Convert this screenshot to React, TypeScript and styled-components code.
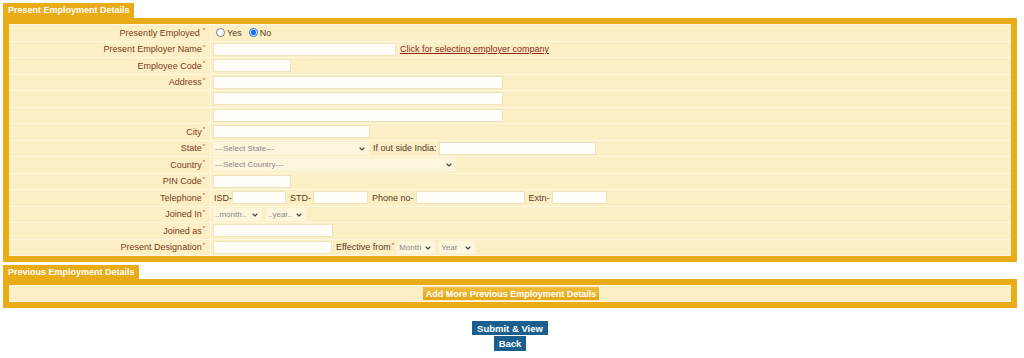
import React from 'react';
import styled, { createGlobalStyle } from 'styled-components';
import { ChevronDown } from 'lucide-react';

const GOLD = '#e9ac17';
const CELL = '#fcefc6';
const LINE = '#fff7e0';

const GlobalStyle = createGlobalStyle`
  html, body {
    margin: 0;
    padding: 0;
    background: #ffffff;
    font-family: "Liberation Sans", Arial, sans-serif;
  }
`;

const Page = styled.div`
  padding: 3px 7px 0 3px;
  font-size: 9px;
`;

const Section = styled.section<{ $gap?: number }>`
  margin-top: ${(p) => p.$gap ?? 0}px;
`;

const Tab = styled.div<{ $h?: number }>`
  display: inline-block;
  background: ${GOLD};
  color: #ffffff;
  font-weight: bold;
  font-size: 9px;
  line-height: ${(p) => p.$h ?? 15}px;
  height: ${(p) => p.$h ?? 15}px;
  padding: 0 4px 0 5px;
`;

const Box = styled.div`
  border: 6px solid ${GOLD};
  background: ${LINE};
  padding: 1px 0;
  display: flex;
  flex-direction: column;
  gap: 1px;
`;

const Row = styled.div<{ $single?: boolean; $h?: number }>`
  display: grid;
  grid-template-columns: ${(p) => (p.$single ? '1fr' : '201px 1fr')};
  gap: 1px;
  height: ${(p) => p.$h ?? 15.5}px;
`;

const LabelCell = styled.div`
  background: ${CELL};
  display: flex;
  align-items: center;
  justify-content: flex-end;
  padding-right: 5px;
  color: #7d3a1a;
  white-space: nowrap;
`;

const Req = styled.sup<{ $space?: boolean }>`
  color: #d2322d;
  font-size: 6px;
  margin-left: ${(p) => (p.$space ? 3 : 1)}px;
  align-self: flex-start;
  line-height: 8px;
  margin-top: 1px;
`;

const ValueCell = styled.div<{ $center?: boolean }>`
  background: ${CELL};
  display: flex;
  align-items: center;
  justify-content: ${(p) => (p.$center ? 'center' : 'flex-start')};
  padding-left: 2px;
  color: #5c3a22;
  white-space: nowrap;
`;

const Input = styled.input<{ $w: number }>`
  box-sizing: border-box;
  width: ${(p) => p.$w}px;
  height: 13px;
  margin: 0;
  padding: 0 2px;
  border: 1px solid #f1e3b9;
  background: #fffef9;
  font-size: 9px;
  font-family: inherit;
  outline: none;
`;

const Text = styled.span<{ $ml?: number; $mr?: number }>`
  margin-left: ${(p) => p.$ml ?? 0}px;
  margin-right: ${(p) => p.$mr ?? 0}px;
  color: #5a3a24;
`;

const Link = styled.a`
  margin-left: 4px;
  color: #8d2a1c;
  text-decoration: underline;
  cursor: pointer;
`;

const RadioLabel = styled.label<{ $ml?: number }>`
  display: inline-flex;
  align-items: center;
  color: #5a3a24;
  margin-right: 7px;
  margin-left: ${(p) => p.$ml ?? 3}px;
`;

const Radio = styled.input`
  width: 9px;
  height: 9px;
  margin: 0 2px 0 0;
  accent-color: #1a73e8;
`;

const SelectWrap = styled.span<{ $w: number; $ml?: number }>`
  position: relative;
  display: inline-flex;
  align-items: center;
  width: ${(p) => p.$w}px;
  height: 13px;
  margin-left: ${(p) => p.$ml ?? 0}px;
  background: #fdf5dc;

  svg {
    position: absolute;
    right: 3px;
    top: 3px;
    pointer-events: none;
    color: #4a4a4a;
  }
`;

const Select = styled.select`
  appearance: none;
  -webkit-appearance: none;
  width: 100%;
  height: 13px;
  border: none;
  background: transparent;
  color: #8a8a8a;
  font-size: 8px;
  font-family: inherit;
  padding: 0 2px;
  margin: 0;
  outline: none;
`;

const AddBtn = styled.button`
  background: linear-gradient(#f1bd3c, #e2a617);
  color: #ffffff;
  font-weight: bold;
  font-size: 9px;
  font-family: inherit;
  border: none;
  height: 13px;
  padding: 0 3px;
  cursor: pointer;
`;

const Actions = styled.div`
  display: flex;
  flex-direction: column;
  align-items: center;
  gap: 1px;
  margin-top: 13px;
`;

const ActionBtn = styled.button<{ $h: number }>`
  background: #1c5f8e;
  color: #ffffff;
  font-weight: bold;
  font-size: 9.5px;
  font-family: inherit;
  border: none;
  height: ${(p) => p.$h}px;
  padding: 0 5px;
  cursor: pointer;
`;

function Dropdown({ w, ml, placeholder }: { w: number; ml?: number; placeholder: string }) {
  return (
    <SelectWrap $w={w} $ml={ml}>
      <Select defaultValue="">
        <option value="">{placeholder}</option>
      </Select>
      <ChevronDown size={8} strokeWidth={3.5} />
    </SelectWrap>
  );
}

function Label({ text, space }: { text?: string; space?: boolean }) {
  return (
    <LabelCell>
      {text && (
        <>
          {text}
          <Req $space={space}>*</Req>
        </>
      )}
    </LabelCell>
  );
}

export default function App() {
  return (
    <>
      <GlobalStyle />
      <Page>
        <Section>
          <Tab>Present Employment Details</Tab>
          <Box>
            <Row>
              <Label text="Presently Employed" space />
              <ValueCell>
                <RadioLabel>
                  <Radio type="radio" name="emp" />
                  Yes
                </RadioLabel>
                <RadioLabel $ml={0}>
                  <Radio type="radio" name="emp" defaultChecked />
                  No
                </RadioLabel>
              </ValueCell>
            </Row>
            <Row>
              <Label text="Present Employer Name" />
              <ValueCell>
                <Input $w={183} />
                <Link>Click for selecting employer company</Link>
              </ValueCell>
            </Row>
            <Row>
              <Label text="Employee Code" />
              <ValueCell>
                <Input $w={78} />
              </ValueCell>
            </Row>
            <Row>
              <Label text="Address" />
              <ValueCell>
                <Input $w={290} />
              </ValueCell>
            </Row>
            <Row>
              <Label />
              <ValueCell>
                <Input $w={290} />
              </ValueCell>
            </Row>
            <Row>
              <Label />
              <ValueCell>
                <Input $w={290} />
              </ValueCell>
            </Row>
            <Row>
              <Label text="City" />
              <ValueCell>
                <Input $w={157} />
              </ValueCell>
            </Row>
            <Row>
              <Label text="State" />
              <ValueCell>
                <Dropdown w={156} placeholder="---Select State---" />
                <Text $ml={4} $mr={2}>If out side India:</Text>
                <Input $w={157} />
              </ValueCell>
            </Row>
            <Row>
              <Label text="Country" />
              <ValueCell>
                <Dropdown w={243} placeholder="---Select Country---" />
              </ValueCell>
            </Row>
            <Row>
              <Label text="PIN Code" />
              <ValueCell>
                <Input $w={78} />
              </ValueCell>
            </Row>
            <Row>
              <Label text="Telephone" />
              <ValueCell>
                <Text $ml={1}>ISD-</Text>
                <Input $w={54} />
                <Text $ml={4} $mr={2}>STD-</Text>
                <Input $w={55} />
                <Text $ml={4} $mr={2}>Phone no-</Text>
                <Input $w={109} />
                <Text $ml={4} $mr={2}>Extn-</Text>
                <Input $w={55} />
              </ValueCell>
            </Row>
            <Row>
              <Label text="Joined In" />
              <ValueCell>
                <Dropdown w={49} placeholder="..month.." />
                <Dropdown w={40} ml={4} placeholder="..year.." />
              </ValueCell>
            </Row>
            <Row>
              <Label text="Joined as" />
              <ValueCell>
                <Input $w={120} />
              </ValueCell>
            </Row>
            <Row>
              <Label text="Present Designation" />
              <ValueCell>
                <Input $w={119} />
                <Text $ml={4}>Effective from</Text>
                <Req>*</Req>
                <Dropdown w={38} ml={3} placeholder="Month" />
                <Dropdown w={36} ml={4} placeholder="Year" />
              </ValueCell>
            </Row>
          </Box>
        </Section>

        <Section $gap={3}>
          <Tab $h={14}>Previous Employment Details</Tab>
          <Box>
            <Row $single $h={15}>
              <ValueCell $center>
                <AddBtn type="button">Add More Previous Employment Details</AddBtn>
              </ValueCell>
            </Row>
          </Box>
        </Section>

        <Actions>
          <ActionBtn $h={14} type="button">Submit &amp; View</ActionBtn>
          <ActionBtn $h={15} type="button">Back</ActionBtn>
        </Actions>
      </Page>
    </>
  );
}
